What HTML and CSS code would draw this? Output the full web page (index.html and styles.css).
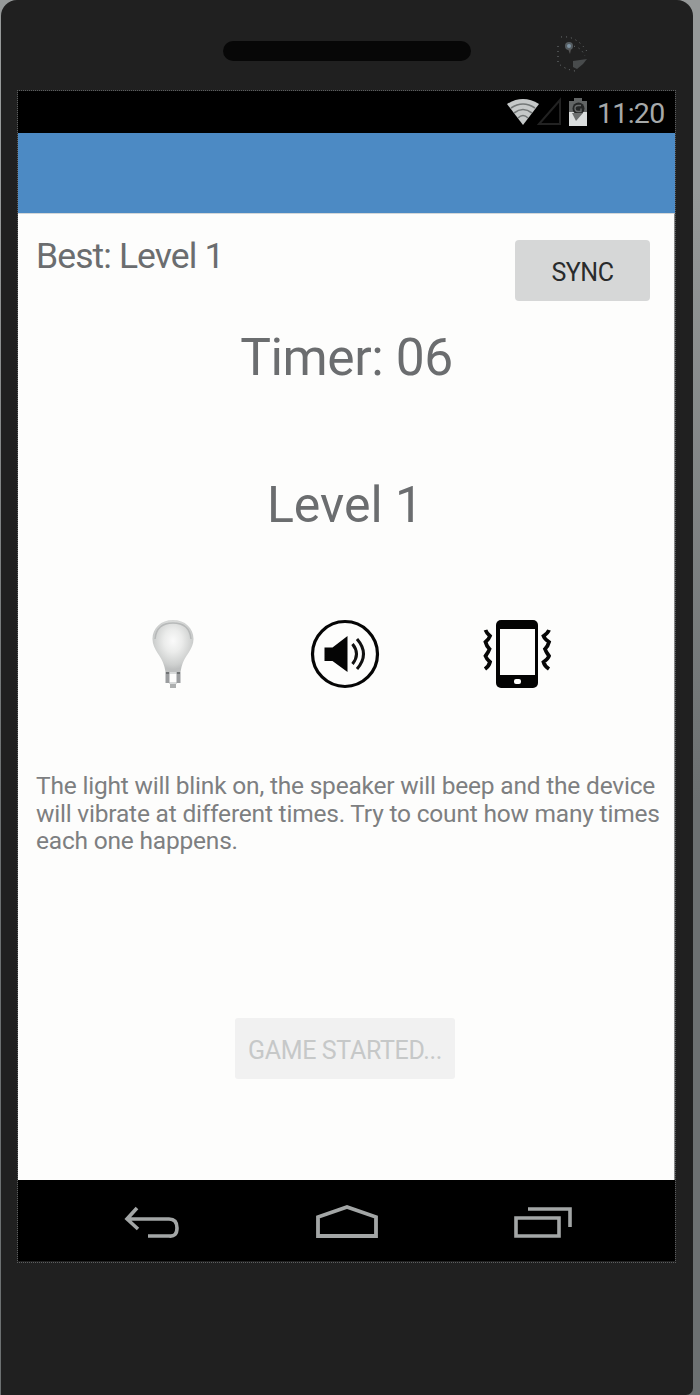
FILE: index.html
```html
<!DOCTYPE html>
<html lang="en">
<head>
<meta charset="utf-8">
<title>Level 1</title>
<link rel="stylesheet" href="styles.css">
</head>
<body>
<div class="phone">
  <div class="bezel-top">
    <div class="earpiece"></div>
    <svg class="camera" width="34" height="38" viewBox="0 0 34 38">
      <g fill="none" stroke="#777c7e" stroke-dasharray="1 4">
        <path d="M4 3Q20 1 31 19M1 12v17Q7 35 18 37M12 12Q23 11 28 22"/>
      </g>
      <circle cx="12" cy="12" r="4" fill="#555c60"/>
      <circle cx="12" cy="12" r="2" fill="#7f94a3"/>
      <path d="M11 15h3l-1 5z" fill="#555"/>
      <path d="M16 27l14-2-4 5-6 5-4-2z" fill="#484b4c"/>
    </svg>
  </div>
  <div class="screen">
    <div class="status">
      <svg class="wifi" width="32" height="26" viewBox="0 0 32 26">
        <path d="M0 5Q16-5 32 5L16 26z" fill="#c6c9c9"/>
        <path d="M4 9Q16 1 28 9M7 14Q16 7 25 14M11 19Q16 14 21 19" fill="none" stroke="#737777" stroke-width="1.6"/>
      </svg>
      <svg class="signal" width="25" height="29" viewBox="0 0 25 29">
        <path d="M23 3v24H2z" fill="none" stroke="#222" stroke-width="2"/>
      </svg>
      <svg class="battery" width="18" height="28" viewBox="0 0 18 28">
        <path d="M5 0h8v3h5v25H0V3h5z" fill="#626565"/>
        <path d="M0 14h18v14H0z" fill="#dadddd"/>
        <circle cx="9.500" cy="10.500" r="6" fill="#242626"/>
        <path d="M12 7.500H9a3 3 0 0 0 0 6h3v-3" fill="none" stroke="#686b6b" stroke-width="1.300"/>
        <path d="M3 15h11l-7 8z" fill="#6d7070"/>
      </svg>
      <span class="clock">11:20</span>
    </div>
    <div class="appbar"></div>
    <main class="content">
      <div class="top-row">
        <div class="best">Best: Level 1</div>
        <button class="sync">SYNC</button>
      </div>
      <div class="timer">Timer: 06</div>
      <div class="level">Level 1</div>
      <div class="icons">
        <svg width="70" height="70" viewBox="0 0 70 70">
          <defs><radialGradient id="glow" cx="50%" cy="40%" r="55%">
            <stop offset="0" stop-color="#fafafa"/><stop offset=".4" stop-color="#ebeceb"/>
            <stop offset=".85" stop-color="#cdcfce"/><stop offset="1" stop-color="#bec0c0"/>
          </radialGradient></defs>
          <path d="M35 1C23 1 14.500 9 14.500 20c0 11 9 16 12 28l1 5h15l1-5c3-12 12-17 12-28C55.500 9 47 1 35 1z" fill="url(#glow)"/>
          <path d="M17 20C18 9 25 4 35 4s17 5 18 16" fill="none" stroke="#b7b9b9" stroke-width="1.500"/>
          <path d="M31 53h8v2h-8zM31 63h8v2h-8z" fill="#d8dada"/>
          <path d="M29.500 53v11M40.500 53v11" stroke="#9b9d9f" stroke-width="4"/>
          <path d="M28 53h3v2h-3zM39 53h3v2h-3z" fill="#707374"/>
          <path d="M32 65h6v4h-6z" fill="#adafaf"/>
        </svg>
        <svg width="70" height="70" viewBox="0 0 70 70">
          <circle cx="35" cy="35" r="32.500" fill="none" stroke="#050505" stroke-width="3.200"/>
          <path d="M14.500 28.500h8L37.500 17v36L22.500 42h-8z" fill="#050505"/>
          <path d="M42.500 25Q50.500 35 42.500 45M47 20Q60 35 47 50" fill="none" stroke="#111" stroke-width="3"/>
        </svg>
        <svg width="70" height="70" viewBox="0 0 70 70">
          <rect x="14" y="1" width="42" height="68" rx="5" fill="#030303"/>
          <path d="M18 10h35v46H18z" fill="#fdfdfc"/>
          <rect x="32" y="60" width="7" height="5" rx="2" fill="#fdfdfc"/>
          <path d="M3.500 11q1 3 4.500 6-1 3-4.500 6 1 4 4 7-1 3-4 7 1 3 4.500 6-1 4-5 7M67 11q-1 3-5.500 6 1 3 5.500 6-1 4-4 7 1 3 4 7-1 3-5.500 6 1 4 5.500 7" fill="none" stroke="#070707" stroke-width="3.800"/>
        </svg>
      </div>
      <p class="help">The light will blink on, the speaker will beep and the device<br>will vibrate at different times. Try to count how many times<br>each one happens.</p>
      <button class="start" disabled>GAME STARTED...</button>
    </main>
    <nav class="nav">
      <svg width="58" height="36" viewBox="0 0 58 36">
        <path d="M14 4L4 15l11 10M4 15h42q8 0 8 9t-8 8H25" fill="none" stroke="#a3a6a6" stroke-width="3.600"/>
      </svg>
      <svg width="64" height="36" viewBox="0 0 64 36">
        <path d="M3 32V13L32 3l29 10v19z" fill="none" stroke="#a3a6a6" stroke-width="3.800"/>
      </svg>
      <svg width="60" height="36" viewBox="0 0 60 36">
        <path d="M3 14h43v18H3zM15 5h42v18" fill="none" stroke="#a3a6a6" stroke-width="3.600"/>
      </svg>
    </nav>
  </div>
</div>
</body>
</html>
```
FILE: styles.css
```css
* { box-sizing: border-box; }
body {
  margin: 0;
  height: 1395px;
  overflow: hidden;
  padding: 0 7px 0 1px;
  background: linear-gradient(#969999 0, #969999 190px, #6c7071 800px);
  font-family: Roboto, sans-serif;
  color: #6b6d6f;
}
.phone {
  height: 1395px;
  padding: 0 16px;
  background: #202020;
  border-radius: 16px 16px 7px 0;
}
.bezel-top {
  display: flex;
  height: 90px;
  padding: 41px 0 0 206px;
}
.earpiece {
  width: 248px;
  height: 20px;
  border-radius: 10px;
  background: #070707;
}
.camera { margin: -7px 0 0 86px; }
.screen {
  width: 659px;
  height: 1173px;
  border: 1px dotted #5b5d5e;
  display: flex;
  flex-direction: column;
}
.status {
  height: 42px;
  background: #000;
  display: flex;
  align-items: flex-start;
  padding-left: 489px;
}
.wifi { margin-top: 8px; }
.signal { margin: 6px 0 0 -2px; }
.battery { margin: 7px 0 0 7px; }
.clock {
  margin: 6px 0 0 10px;
  font-size: 28.5px;
  line-height: 34px;
  letter-spacing: -.7px;
  color: #a6a9a9;
  white-space: nowrap;
}
.appbar {
  height: 80px;
  background: #4c8ac4;
}
.content {
  height: 967px;
  padding: 27px 17px 0 18px;
  background: #fdfdfc;
  border-top: 1px solid #d4d7d8;
  border-right: 1px solid #858888;
  display: flex;
  flex-direction: column;
}
.top-row {
  display: flex;
  justify-content: space-between;
  height: 61px;
  padding-right: 7px;
}
.best {
  margin-top: -6px;
  font-size: 35.5px;
  line-height: 42px;
  letter-spacing: -.9px;
  white-space: nowrap;
}
button {
  border: 0;
  padding: 0;
  font-family: inherit;
}
.sync {
  width: 135px;
  height: 61px;
  margin-top: -1px;
  padding-top: 3px;
  border-radius: 4px;
  background: #d6d7d7;
  color: #292b2c;
  font-size: 25px;
  letter-spacing: -.5px;
}
.timer, .level {
  text-align: center;
  font-size: 51.5px;
  line-height: 60px;
  white-space: nowrap;
}
.timer { margin-top: 26px; letter-spacing: -.4px; }
.level { margin-top: 87px; padding-right: 3px; font-size: 50px; }
.icons {
  display: flex;
  gap: 102px;
  height: 70px;
  margin: 84px 0 0 102px;
}
.help {
  margin: 83px 0 0;
  font-size: 24.5px;
  line-height: 27.5px;
  letter-spacing: -.2px;
  white-space: nowrap;
  color: #7d7f81;
}
.start {
  width: 220px;
  height: 61px;
  margin: 163px 0 0 199px;
  padding-top: 4px;
  border-radius: 3px;
  background: #f1f1f1;
  color: #c6c8c8;
  font-size: 25px;
  letter-spacing: -.35px;
}
.nav {
  height: 81px;
  background: #000;
  display: flex;
  gap: 134px;
  padding: 24px 0 0 105px;
}
```
